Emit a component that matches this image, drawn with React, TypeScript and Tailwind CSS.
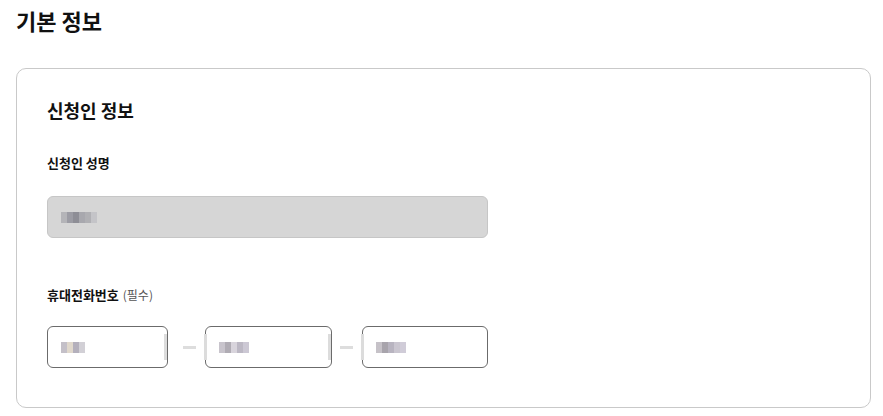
import React from 'react';

const font = { fontFamily: '"Noto Sans CJK KR", "Noto Sans", sans-serif' };

// pixelated placeholder for masked values
function Mosaic({ cells }: { cells: string[] }) {
  return (
    <div className="flex">
      {cells.map((c, i) => (
        <div key={i} className="w-[6px] h-[11px]" style={{ backgroundColor: c }} />
      ))}
    </div>
  );
}

function PhoneBox({ width, cells, barLeft, barRight }: { width: string; cells: string[]; barLeft?: boolean; barRight?: boolean }) {
  return (
    <div className={`relative ${width} h-[42px] rounded-[6px] border border-[#6b6b6b] bg-white flex items-center pl-[13px]`}>
      <Mosaic cells={cells} />
      {barRight && <div className="absolute right-[0px] top-[7px] w-[3px] h-[26px] bg-[#dcdcdc]" />}
      {barLeft && <div className="absolute left-[-2px] top-[7px] w-[3px] h-[26px] bg-[#dcdcdc]" />}
    </div>
  );
}

export default function App() {
  return (
    <div className="w-[883px] h-[416px] bg-white px-[16px] pt-[4px]" style={font}>
      <h1 className="text-[22px] font-bold text-[#111] leading-[32px]">기본 정보</h1>

      <div className="mt-[32px] w-[855px] h-[340px] rounded-[10px] border border-[#c9c9c9] px-[30px] pt-[28px]">
        <h2 className="text-[18px] font-bold text-[#111] leading-[26px]">신청인 정보</h2>

        <div className="mt-[30px] text-[13px] font-bold text-[#111] leading-[20px]">신청인 성명</div>
        <div className="mt-[23px] w-[441px] h-[42px] rounded-[6px] border border-[#c6c6c6] bg-[#d6d6d6] flex items-center pl-[13px]">
          <Mosaic cells={['#b4b4b8', '#9c9ca4', '#8e8e96', '#a8a8ae', '#b0b0b4', '#c4c4c8']} />
        </div>

        <div className="mt-[47px] flex items-baseline gap-[4px] leading-[20px]">
          <span className="text-[13px] font-bold text-[#111]">휴대전화번호</span>
          <span className="text-[12px] text-[#555]">(필수)</span>
        </div>

        <div className="mt-[21px] flex items-center">
          <PhoneBox width="w-[121px]" cells={['#c4c0c8', '#e0d8cc', '#b4b0bc', '#d2d0d6']} barRight />
          <div className="w-[37px] pl-[15px]"><div className="w-[13px] h-[3px] bg-[#dddddd]" /></div>
          <PhoneBox width="w-[127px]" cells={['#c8c4cc', '#b0acb4', '#d8d4dc', '#bcb8c4', '#ccc8d4']} barLeft barRight />
          <div className="w-[30px] pl-[8px]"><div className="w-[13px] h-[3px] bg-[#dddddd]" /></div>
          <PhoneBox width="w-[126px]" cells={['#c6c2c8', '#a8a4ac', '#b8b4c0', '#cac6d0', '#d0ccd8']} barLeft />
        </div>
      </div>
    </div>
  );
}
